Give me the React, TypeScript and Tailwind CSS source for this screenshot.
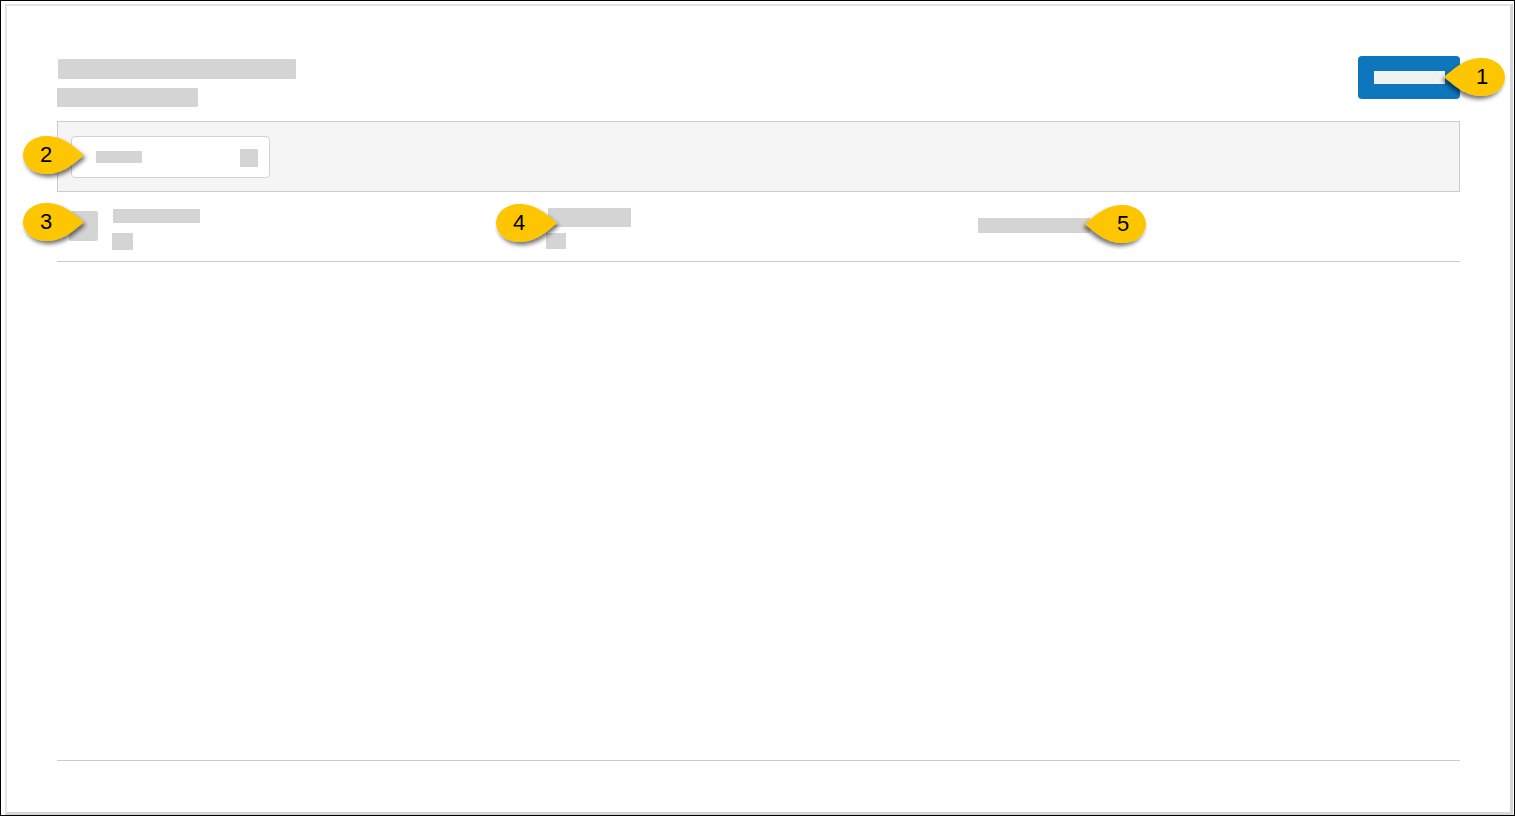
type CalloutProps = {
  n: number;
  dir: "left" | "right";
  className: string;
};

// yellow numbered teardrop marker; the tip points at the thing it labels
function Callout({ n, dir, className }: CalloutProps) {
  const id = `shadow-${n}`;
  return (
    <div className={`absolute w-[70px] h-[48px] ${className}`}>
      <svg
        width="70"
        height="48"
        viewBox="0 0 70 48"
        className={dir === "left" ? "-scale-x-100" : ""}
      >
        <defs>
          <filter id={id} x="-20%" y="-20%" width="150%" height="160%">
            <feDropShadow dx="2" dy="3" stdDeviation="2" floodColor="#000" floodOpacity="0.55" />
          </filter>
        </defs>
        <path
          d="M62,22 C51,13 41,3 24,3 A23,19 0 1 0 24,41 C41,41 51,31 62,22 Z"
          fill="#fdc600"
          filter={`url(#${id})`}
        />
      </svg>
      <span
        className={`absolute top-[8px] w-[46px] text-center text-[22px] leading-[28px] text-black font-['Liberation_Sans',Arial,sans-serif] ${
          dir === "left" ? "left-[23px]" : "left-[1px]"
        }`}
      >
        {n}
      </span>
    </div>
  );
}

function Bar({ className }: { className: string }) {
  return <div className={`bg-[#d4d4d4] ${className}`} />;
}

export default function App() {
  return (
    <div className="relative w-[1515px] h-[816px] border border-black bg-white overflow-hidden font-['Liberation_Sans',Arial,sans-serif]">
      <div className="ml-[4px] mt-[3px] w-[1508px] h-[811px] border-t-2 border-l-2 border-r-[3px] border-b-[3px] border-t-[#e4e4e4] border-l-[#e4e4e4] border-r-[#d6d6d6] border-b-[#d6d6d6] bg-white px-[50px] pt-[50px]">
        {/* header */}
        <div className="flex justify-between items-start">
          <div className="flex flex-col">
            <Bar className="ml-[1px] mt-[3px] w-[238px] h-[20px] rounded-[1px]" />
            <Bar className="mt-[9px] w-[141px] h-[19px] rounded-[1px]" />
          </div>
          <div className="flex items-center w-[102px] h-[43px] rounded-[4px] bg-[#0e76bc] pl-[16px]">
            <div className="w-[71px] h-[13px] bg-[#f2f2f2]" />
          </div>
        </div>

        {/* filter strip */}
        <div className="mt-[14px] h-[71px] flex items-center px-[13px] border border-[#cccccc] bg-[#f5f5f5]">
          <div className="flex items-center justify-between w-[199px] h-[42px] rounded-[4px] border border-[#d2d2d2] bg-white pl-[24px] pr-[11px]">
            <Bar className="w-[46px] h-[12px]" />
            <Bar className="w-[18px] h-[18px] mt-[3px]" />
          </div>
        </div>

        {/* single row */}
        <div className="flex h-[70px] border-b border-[#cccccc]">
          <div className="w-[489px] flex pl-[12px] pt-[19px] gap-[15px]">
            <Bar className="w-[29px] h-[30px] rounded-[2px]" />
            <div className="flex flex-col -mt-[2px]">
              <Bar className="w-[87px] h-[14px]" />
              <Bar className="-ml-[1px] mt-[10px] w-[21px] h-[17px]" />
            </div>
          </div>
          <div className="w-[432px] flex flex-col pt-[16px]">
            <Bar className="ml-[2px] w-[83px] h-[19px]" />
            <Bar className="mt-[6px] w-[20px] h-[16px]" />
          </div>
          <div className="flex-1 pt-[26px]">
            <Bar className="w-[112px] h-[15px]" />
          </div>
        </div>

        {/* empty list area */}
        <div className="h-[499px] border-b border-[#cccccc]" />
      </div>

      <Callout n={1} dir="left" className="left-[1435px] top-[54px]" />
      <Callout n={2} dir="right" className="left-[21px] top-[132px]" />
      <Callout n={3} dir="right" className="left-[21px] top-[199px]" />
      <Callout n={4} dir="right" className="left-[494px] top-[200px]" />
      <Callout n={5} dir="left" className="left-[1076px] top-[201px]" />
    </div>
  );
}
